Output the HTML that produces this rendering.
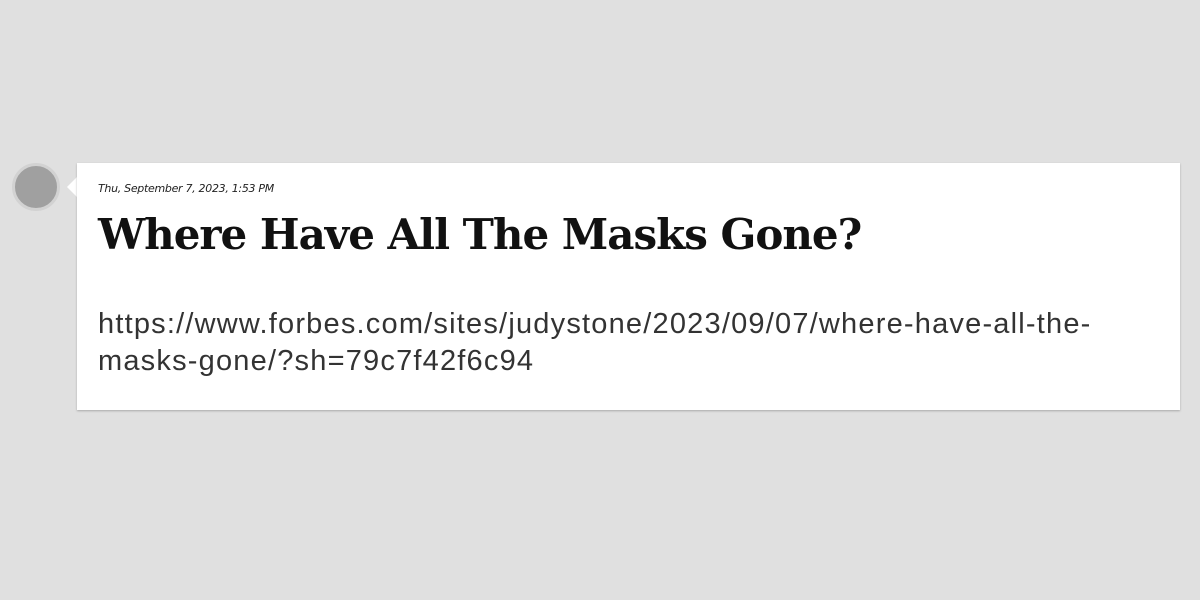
<!DOCTYPE html>
<html><head><style>
html,body{margin:0;padding:0;width:1200px;height:600px;background:#e0e0e0;overflow:hidden}
.av{position:absolute;left:12px;top:163px;width:42px;height:42px;border-radius:50%;background:#a0a0a0;border:3px solid #d2d2d2;box-sizing:content-box}
.card{position:absolute;left:77px;top:163px;width:1103px;height:247px;background:#fff;box-shadow:0 1px 2px rgba(0,0,0,.25)}
.tri{position:absolute;left:67px;top:177px;width:0;height:0;border-top:10px solid transparent;border-bottom:10px solid transparent;border-right:10px solid #fff}
.date{position:absolute;left:21px;top:19px;font:italic 11px "DejaVu Sans",sans-serif;color:#222;letter-spacing:-0.3px}
.title{position:absolute;left:21px;top:47px;font:bold 42px "DejaVu Serif",serif;color:#111;letter-spacing:-1px;white-space:nowrap}
.url{position:absolute;left:21px;top:143px;width:1080px;font:29px/37px "Liberation Sans",sans-serif;letter-spacing:1.2px;color:#333;white-space:nowrap}
</style></head><body>
<div class="av"></div>
<div class="tri"></div>
<div class="card">
<div class="date">Thu, September 7, 2023, 1:53 PM</div>
<div class="title">Where Have All The Masks Gone?</div>
<div class="url">https://www.forbes.com/sites/judystone/2023/09/07/where-have-all-the-<br>masks-gone/?sh=79c7f42f6c94</div>
</div>
</body></html>
